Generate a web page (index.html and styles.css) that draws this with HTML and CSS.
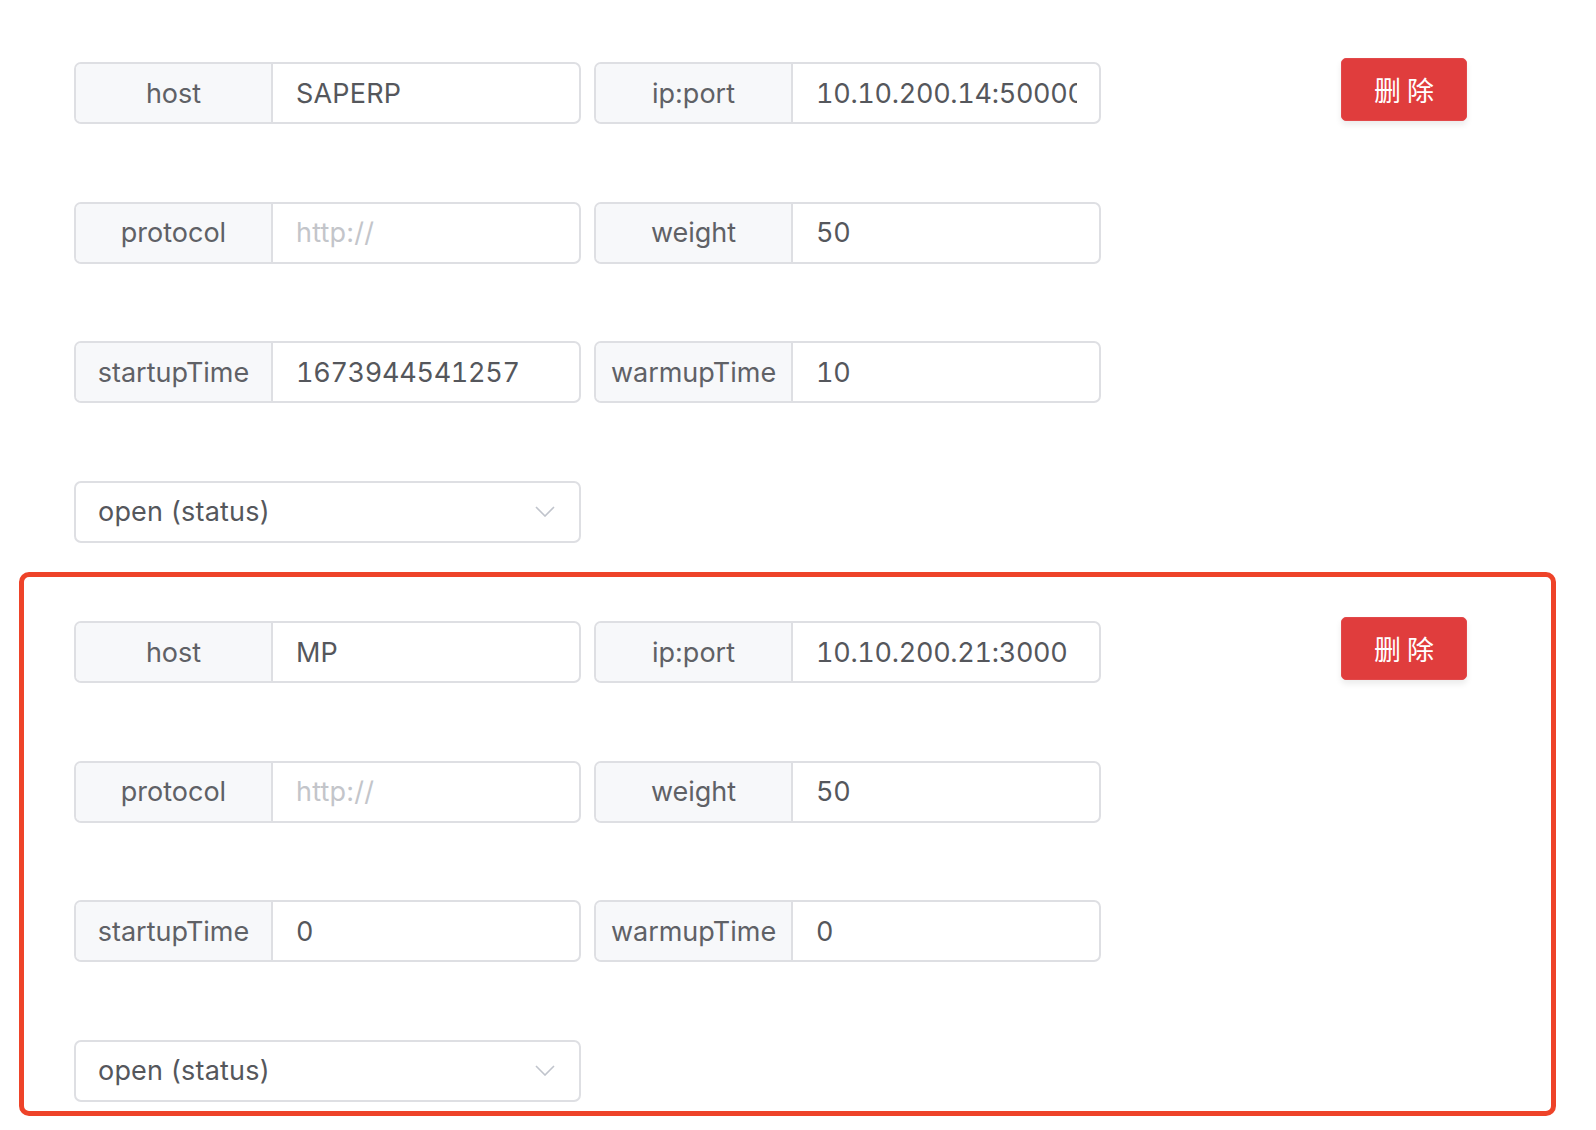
FILE: index.html
```html
<!DOCTYPE html>
<html lang="zh-CN">
<head>
<meta charset="utf-8">
<title>Servers</title>
<link rel="stylesheet" href="styles.css">
</head>
<body>
<div class="list">
  <section class="group">
    <div class="fields">
      <div class="row">
        <div class="ig"><div class="lbl">host</div><div class="val"><span class="txt">SAPERP</span></div></div>
        <div class="ig"><div class="lbl">ip:port</div><div class="val"><span class="txt num">10.10.200.14:50000</span></div></div>
      </div>
      <div class="row">
        <div class="ig"><div class="lbl">protocol</div><div class="val"><span class="txt ph">http://</span></div></div>
        <div class="ig"><div class="lbl">weight</div><div class="val"><span class="txt num">50</span></div></div>
      </div>
      <div class="row">
        <div class="ig"><div class="lbl">startupTime</div><div class="val"><span class="txt num">1673944541257</span></div></div>
        <div class="ig"><div class="lbl">warmupTime</div><div class="val"><span class="txt num">10</span></div></div>
      </div>
      <div class="row">
        <div class="select"><span class="txt">open (status)</span>
          <svg class="chev" width="20" height="11" viewBox="0 0 20 11"><path d="M1 1 L10 10 L19 1" fill="none" stroke="#c0c4cc" stroke-width="1.6"/></svg>
        </div>
      </div>
    </div>
    <button class="del">删 除</button>
  </section>
  <section class="group active">
    <div class="fields">
      <div class="row">
        <div class="ig"><div class="lbl">host</div><div class="val"><span class="txt">MP</span></div></div>
        <div class="ig"><div class="lbl">ip:port</div><div class="val"><span class="txt num">10.10.200.21:3000</span></div></div>
      </div>
      <div class="row">
        <div class="ig"><div class="lbl">protocol</div><div class="val"><span class="txt ph">http://</span></div></div>
        <div class="ig"><div class="lbl">weight</div><div class="val"><span class="txt num">50</span></div></div>
      </div>
      <div class="row">
        <div class="ig"><div class="lbl">startupTime</div><div class="val"><span class="txt num">0</span></div></div>
        <div class="ig"><div class="lbl">warmupTime</div><div class="val"><span class="txt num">0</span></div></div>
      </div>
      <div class="row">
        <div class="select"><span class="txt">open (status)</span>
          <svg class="chev" width="20" height="11" viewBox="0 0 20 11"><path d="M1 1 L10 10 L19 1" fill="none" stroke="#c0c4cc" stroke-width="1.6"/></svg>
        </div>
      </div>
    </div>
    <button class="del">删 除</button>
  </section>
</div>
</body>
</html>
```
FILE: styles.css
```css
html, body {
  margin: 0;
  padding: 0;
  background: #ffffff;
}
body {
  font-family: Inter, "Liberation Sans", "Noto Sans CJK SC", sans-serif;
  color: #5a5c61;
}
.list {
  padding-top: 13px;
  margin-left: 19px;
  width: 1537px;
  display: flex;
  flex-direction: column;
  gap: 15.5px;
}
.group {
  display: flex;
  align-items: flex-start;
  border: 5px solid transparent;
  border-radius: 10px;
  padding: 44px 84px 9px 50px;
}
.group.active {
  border-color: #ee4329;
}
.fields {
  display: flex;
  flex-direction: column;
  gap: 77.5px;
}
.row {
  display: flex;
  gap: 13px;
  height: 62px;
}
.ig {
  width: 507px;
  height: 62px;
  box-sizing: border-box;
  border: 2px solid #dedfe3;
  border-radius: 7px;
  display: flex;
  overflow: hidden;
}
.lbl {
  width: 195px;
  flex: none;
  background: #f7f8fa;
  border-right: 2px solid #dedfe3;
  display: flex;
  align-items: center;
  justify-content: center;
  font-size: 27px;
  color: #5f6166;
  white-space: nowrap;
}
.val {
  flex: 1;
  min-width: 0;
  padding: 0 22px 0 23px;
  display: flex;
  align-items: center;
  overflow: hidden;
}
.txt {
  font-size: 27px;
  color: #55575c;
  white-space: nowrap;
  overflow: hidden;
  letter-spacing: 0.2px;
}
.txt.num {
  font-variant-numeric: tabular-nums;
  letter-spacing: -0.3px;
}
.txt.ph {
  color: #c3c5ca;
}
.select {
  width: 507px;
  height: 62px;
  box-sizing: border-box;
  border: 2px solid #dedfe3;
  border-radius: 7px;
  display: flex;
  align-items: center;
  justify-content: space-between;
  padding: 0 24px 0 22px;
}
.chev {
  display: block;
}
.del {
  margin-left: auto;
  margin-top: -4px;
  width: 126px;
  height: 63px;
  border: 1px solid #e2484a;
  border-radius: 5px;
  background: #e03d3d;
  color: #ffffff;
  font-family: "Noto Sans CJK SC", sans-serif;
  font-size: 27px;
  font-weight: 400;
  padding: 0;
  box-shadow: 0 4px 6px rgba(0, 0, 0, 0.08);
}
```
